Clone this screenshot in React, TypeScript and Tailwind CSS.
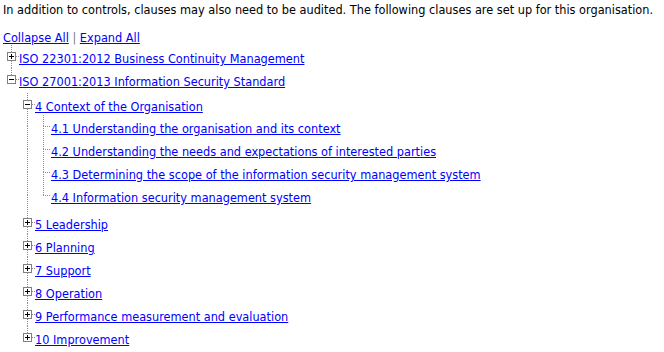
type Cell = { up?: boolean; down?: boolean; right?: boolean; box?: 'plus' | 'minus' };
type Row = { text: string; cells: Cell[]; h: number };

const pipe: Cell = { up: true, down: true };
const tee: Cell = { up: true, down: true, right: true };

const rows: Row[] = [
  { text: 'ISO 22301:2012 Business Continuity Management', cells: [{ up: true, down: true, right: true, box: 'plus' }], h: 23 },
  { text: 'ISO 27001:2013 Information Security Standard', cells: [{ up: true, right: true, box: 'minus' }], h: 25 },
  { text: '4 Context of the Organisation', cells: [{}, { up: true, down: true, right: true, box: 'minus' }], h: 22 },
  { text: '4.1 Understanding the organisation and its context', cells: [{}, pipe, tee], h: 23 },
  { text: '4.2 Understanding the needs and expectations of interested parties', cells: [{}, pipe, tee], h: 23 },
  { text: '4.3 Determining the scope of the information security management system', cells: [{}, pipe, tee], h: 23 },
  { text: '4.4 Information security management system', cells: [{}, pipe, { up: true, right: true }], h: 27 },
  { text: '5 Leadership', cells: [{}, { up: true, down: true, right: true, box: 'plus' }], h: 23 },
  { text: '6 Planning', cells: [{}, { up: true, down: true, right: true, box: 'plus' }], h: 23 },
  { text: '7 Support', cells: [{}, { up: true, down: true, right: true, box: 'plus' }], h: 23 },
  { text: '8 Operation', cells: [{}, { up: true, down: true, right: true, box: 'plus' }], h: 23 },
  { text: '9 Performance measurement and evaluation', cells: [{}, { up: true, down: true, right: true, box: 'plus' }], h: 23 },
  { text: '10 Improvement', cells: [{}, { up: true, right: true, box: 'plus' }], h: 23 },
];

const CY = 11;

function TreeCell({ cell, h }: { cell: Cell; h: number }) {
  const cx = 8.5;
  const top = cell.box ? CY - 4 : CY;
  const bottom = cell.box ? CY + 5 : CY;
  const left = cell.box ? 13 : 8;
  return (
    <svg width="16" height={h} className="shrink-0" shapeRendering="crispEdges">
      <g stroke="#8c8c8c" strokeWidth="1" strokeDasharray="1 1">
        {cell.up && <line x1={cx} y1={0} x2={cx} y2={top} />}
        {cell.down && <line x1={cx} y1={bottom} x2={cx} y2={h} />}
        {cell.right && <line x1={left} y1={CY + 0.5} x2={16} y2={CY + 0.5} />}
      </g>
      {cell.box && (
        <g>
          <rect x="4.5" y={CY - 3.5} width="8" height="8" fill="#fff" stroke="#808080" />
          <line x1="6" y1={CY + 0.5} x2="11" y2={CY + 0.5} stroke="#000" />
          {cell.box === 'plus' && <line x1="8.5" y1={CY - 2} x2="8.5" y2={CY + 3} stroke="#000" />}
        </g>
      )}
    </svg>
  );
}

export default function App() {
  return (
    <main
      className="min-h-screen w-[664px] h-[352px] bg-white text-[12.6px] text-black overflow-hidden"
      style={{ fontFamily: 'Tahoma, "DejaVu Sans Condensed", "DejaVu Sans", sans-serif' }}
    >
      <p className="pl-[3px] pt-[2px] leading-[16px] whitespace-nowrap">
        In addition to controls, clauses may also need to be audited. The following clauses are set up for this organisation.
      </p>
      <div className="pl-[3px] mt-[12px] leading-[15px] whitespace-nowrap">
        <a href="#" className="text-[#0000ff] underline">Collapse All</a>
        <span className="text-[#7a7a7a]"> | </span>
        <a href="#" className="text-[#0000ff] underline">Expand All</a>
      </div>
      <div className="pl-[3px]">
        {rows.map((r) => (
          <div key={r.text} className="flex items-start" style={{ height: r.h }}>
            {r.cells.map((c, i) => (
              <TreeCell key={i} cell={c} h={r.h} />
            ))}
            <div className="h-[23px] pt-[6px] whitespace-nowrap">
              <a href="#" className="block text-[#0000ff] underline leading-[15px]">{r.text}</a>
            </div>
          </div>
        ))}
      </div>
    </main>
  );
}
